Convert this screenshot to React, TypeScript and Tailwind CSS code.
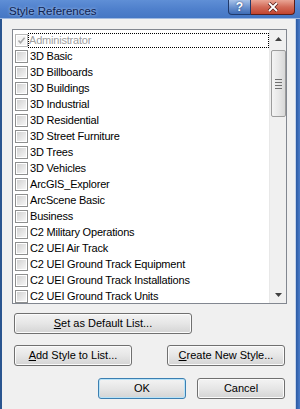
import React from 'react'

const styles = [
  '3D Basic',
  '3D Billboards',
  '3D Buildings',
  '3D Industrial',
  '3D Residential',
  '3D Street Furniture',
  '3D Trees',
  '3D Vehicles',
  'ArcGIS_Explorer',
  'ArcScene Basic',
  'Business',
  'C2 Military Operations',
  'C2 UEI Air Track',
  'C2 UEI Ground Track Equipment',
  'C2 UEI Ground Track Installations',
  'C2 UEI Ground Track Units',
]

function Check({ checked, disabled }: { checked?: boolean; disabled?: boolean }) {
  return (
    <div className={`w-[13px] h-[13px] shrink-0 border ${disabled ? 'border-[#b8b8b8]' : 'border-[#8e8f8f]'} bg-white p-px`}>
      <div className={`w-full h-full relative ${disabled ? 'bg-[#f4f4f4]' : 'bg-gradient-to-br from-[#d2d2d2] to-[#f6f6f6]'}`}>
        {checked && (
          <svg viewBox="0 0 9 9" className="absolute inset-0 w-full h-full">
            <path d="M1.5 4.5 L3.5 6.8 L7.6 1.8" fill="none" stroke={disabled ? '#a9a9a9' : '#333'} strokeWidth="1.6" />
          </svg>
        )}
      </div>
    </div>
  )
}

function Btn({ children, className = '', def }: { children: React.ReactNode; className?: string; def?: boolean }) {
  return (
    <button
      className={`h-[21px] rounded-[3px] border ${def ? 'border-[#3c7fb1] shadow-[inset_0_0_0_1px_#b8e3f8]' : 'border-[#707070] shadow-[inset_0_0_0_1px_#fbfbfb]'} bg-gradient-to-b from-[#f3f3f3] via-[#e6e6e6] to-[#d4d4d4] text-[11px] text-black leading-none flex items-center justify-center ${className}`}
    >
      {children}
    </button>
  )
}

export default function App() {
  return (
    <div className="w-[300px] h-[409px] flex flex-col overflow-hidden bg-[#f0f0f0]" style={{ fontFamily: '"Liberation Sans", Arial, sans-serif' }}>
      {/* title bar */}
      <div className="h-[19px] shrink-0 flex items-start bg-gradient-to-b from-[#5f8fd6] via-[#4f80cc] to-[#4577c4] border-b border-[#9fb9e0]">
        <div className="pl-[9px] pt-[3px] text-[11.5px] text-[#0d2150] [text-shadow:0_0_3px_#c9dcf5]">Style References</div>
        <div className="ml-auto flex mr-[5px]">
          <div className="w-[23px] h-[15px] rounded-bl-[4px] border border-t-0 border-[#20396a] bg-gradient-to-b from-[#a8c2e8] via-[#6d93cf] to-[#3d6bb5] flex items-center justify-center text-white text-[12px] font-bold leading-none [text-shadow:0_0_2px_#1d3a70]">?</div>
          <div className="w-[44px] h-[15px] rounded-br-[4px] border border-t-0 border-l-0 border-[#5a1e1a] bg-gradient-to-b from-[#e9a595] via-[#d26a58] to-[#c2442f] flex items-center justify-center">
            <svg width="12" height="10" viewBox="0 0 12 10">
              <path d="M2 1 L10 9 M10 1 L2 9" stroke="#5a1e1a" strokeWidth="3.4" />
              <path d="M2 1 L10 9 M10 1 L2 9" stroke="#fff" strokeWidth="1.8" />
            </svg>
          </div>
        </div>
      </div>

      <div className="flex-1 flex">
        <div className="w-[2px] bg-[#2a5590]" />
        <div className="flex-1 flex flex-col">
          {/* list box */}
          <div className="ml-[10px] mt-[10px] w-[275px] h-[275px] border border-[#828790] bg-white flex overflow-hidden">
            <div className="flex-1 pt-[2px] pl-[2px] overflow-hidden">
              <div className="h-[16px] flex items-center">
                <Check checked disabled />
                <div className="h-[15px] flex-1 border border-dotted border-black flex items-center text-[11px] tracking-[-0.2px] text-[#a0a0a0]">Administrator</div>
              </div>
              {styles.map((s) => (
                <div key={s} className="h-[16px] flex items-center">
                  <Check />
                  <span className="ml-[2px] text-[11px] tracking-[-0.2px] text-black whitespace-nowrap">{s}</span>
                </div>
              ))}
            </div>
            {/* scrollbar */}
            <div className="w-[17px] bg-[#f0f0f0] border-l border-[#e8e8e8] flex flex-col items-center">
              <div className="h-[17px] w-full flex items-center justify-center">
                <svg width="7" height="4" viewBox="0 0 7 4"><path d="M0 4 L3.5 0 L7 4 Z" fill="#404040" /></svg>
              </div>
              <div className="w-[15px] h-[67px] mt-[3px] rounded-[2px] border border-[#9c9c9c] bg-gradient-to-r from-[#f4f4f4] via-[#e8e8e8] to-[#d8d8d8] flex flex-col items-center justify-center gap-[2px]">
                <div className="w-[7px] h-px bg-[#707070]" />
                <div className="w-[7px] h-px bg-[#707070]" />
                <div className="w-[7px] h-px bg-[#707070]" />
                <div className="w-[7px] h-px bg-[#707070]" />
              </div>
              <div className="flex-1" />
              <div className="h-[17px] w-full flex items-center justify-center">
                <svg width="7" height="4" viewBox="0 0 7 4"><path d="M0 0 L3.5 4 L7 0 Z" fill="#404040" /></svg>
              </div>
            </div>
          </div>

          <Btn className="ml-[12px] mt-[9px] w-[178px]"><span><u>S</u>et as Default List...</span></Btn>

          <div className="mt-[11px] ml-[12px] flex gap-[35px]">
            <Btn className="w-[118px]"><span><u>A</u>dd Style to List...</span></Btn>
            <Btn className="w-[118px]"><span><u>C</u>reate New Style...</span></Btn>
          </div>

          <div className="mt-[12px] ml-[96px] flex gap-[11px]">
            <Btn def className="w-[88px]">OK</Btn>
            <Btn className="w-[88px]">Cancel</Btn>
          </div>
        </div>
        <div className="w-[5px] flex">
          <div className="w-px bg-[#c6d4ea]" />
          <div className="flex-1 bg-gradient-to-r from-[#2b5aa3] to-[#4a7bc8]" />
        </div>
      </div>
    </div>
  )
}
